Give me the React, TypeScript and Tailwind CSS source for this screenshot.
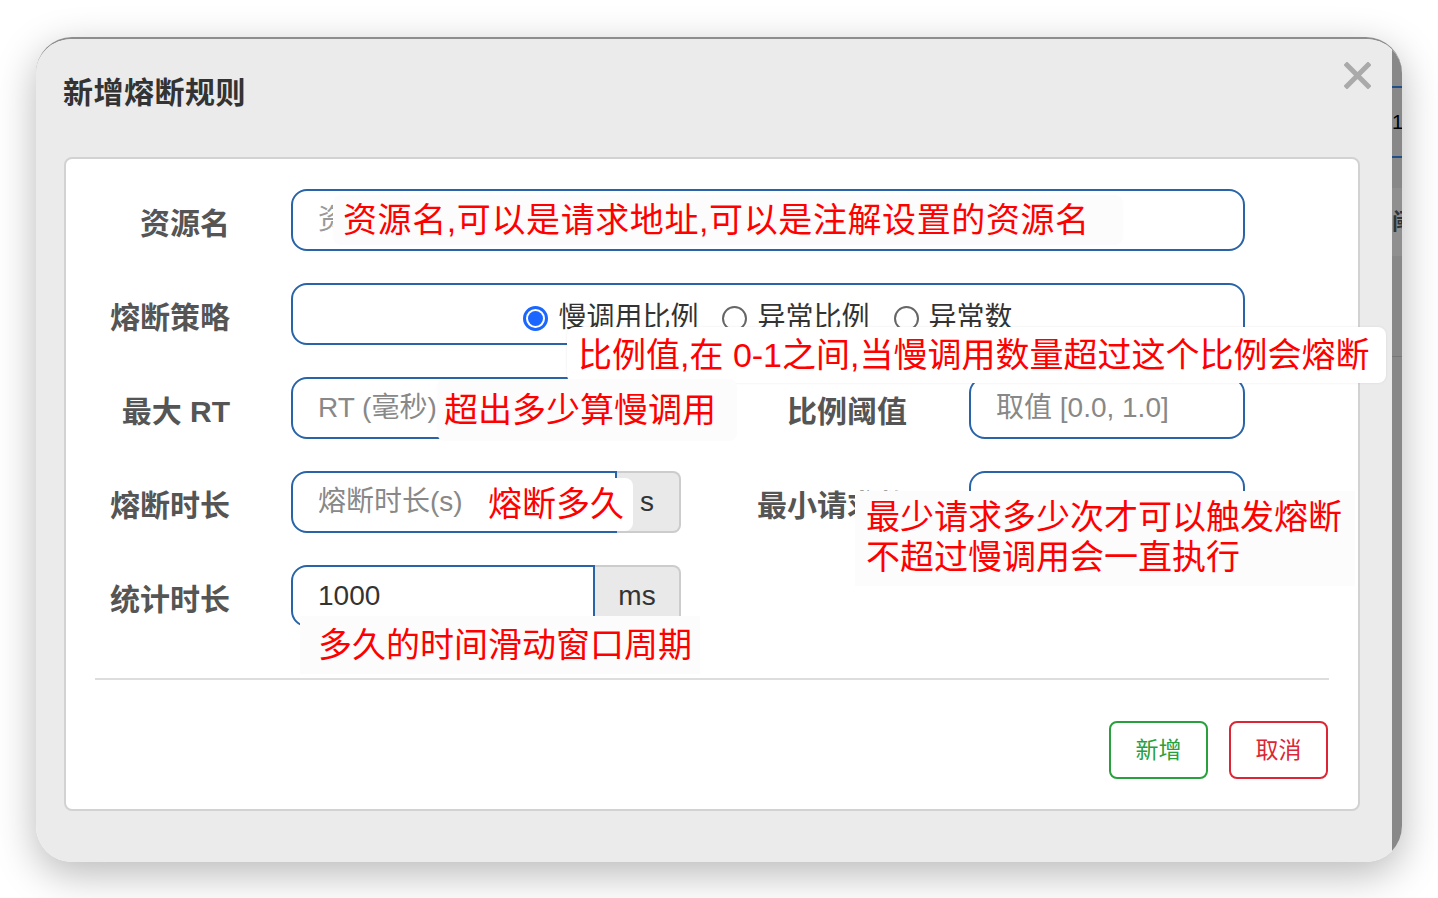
import React from 'react';

const cjk = { fontFamily: '"Liberation Sans", "Noto Sans CJK SC", sans-serif' };

const Label: React.FC<{ text: string; className?: string }> = ({ text, className }) => (
  <div className={`shrink-0 text-right text-[30px] font-bold leading-[36px] text-[#555] mt-[17px] ${className ?? 'w-[164px]'}`}>
    {text}
  </div>
);

const Radio: React.FC<{ checked?: boolean; label: string }> = ({ checked, label }) => (
  <label className="flex items-center gap-[10px] text-[28px] text-[#333]">
    {checked ? (
      <span className="w-[25px] h-[25px] rounded-full border-[3px] border-[#1a66ff] flex items-center justify-center">
        <span className="w-[15px] h-[15px] rounded-full bg-[#1a66ff]" />
      </span>
    ) : (
      <span className="w-[25px] h-[25px] rounded-full border-2 border-[#666] bg-white" />
    )}
    <span>{label}</span>
  </label>
);

const Note: React.FC<{ className: string; children: React.ReactNode }> = ({ className, children }) => (
  <div className={`absolute bg-[#fcfcfc] rounded-lg text-[34px] text-[#ff0000] ${className}`}>{children}</div>
);

export default function App() {
  return (
    <div className="w-[1438px] h-[898px] bg-white pl-[36px] pt-[37px]" style={cjk}>
      <div className="w-[1366px] h-[825px] rounded-[36px] overflow-hidden border-t-2 border-[#8d8d8d] flex shadow-[0_12px_40px_rgba(0,0,0,0.28)]">
        {/* modal */}
        <div className="relative w-[1356px] bg-[#ebebeb] pt-[36px] pl-[27px]">
          <h2 className="text-[30px] font-bold leading-[36px] text-[#333] tracking-[0.5px]">新增熔断规则</h2>
          <button className="absolute right-[20px] top-[21px] w-[30px] h-[30px] flex items-center justify-center">
            <svg width="27" height="27" viewBox="0 0 27 27">
              <path d="M3 3 L24 24 M24 3 L3 24" stroke="#aaaaaa" strokeWidth="5" strokeLinecap="square" />
            </svg>
          </button>

          <div className="relative mt-[46px] ml-[1px] w-[1296px] h-[654px] bg-white border-2 border-[#d2d2d2] rounded-lg pt-[30px]">
            <div className="flex flex-col gap-[32px]">
              {/* 资源名 */}
              <div className="flex items-start">
                <Label text="资源名" />
                <div className="ml-[61px] w-[954px] h-[62px] border-2 border-[#2a64a8] rounded-2xl flex items-center pl-[25px] text-[28px] text-[#999]">
                  资源名
                </div>
              </div>

              {/* 熔断策略 */}
              <div className="flex items-start">
                <Label text="熔断策略" />
                <div className="ml-[61px] w-[954px] h-[62px] border-2 border-[#2a64a8] rounded-2xl flex items-center justify-center gap-[24px] pt-[8px]">
                  <Radio checked label="慢调用比例" />
                  <Radio label="异常比例" />
                  <Radio label="异常数" />
                </div>
              </div>

              {/* 最大 RT / 比例阈值 */}
              <div className="flex items-start">
                <Label text="最大 RT" />
                <div className="ml-[61px] w-[389px] h-[62px] border-2 border-[#2a64a8] rounded-2xl flex items-center pl-[25px] text-[28px] text-[#888]">
                  RT (毫秒)
                </div>
                <Label text="比例阈值" className="w-[227px]" />
                <div className="ml-[62px] w-[276px] h-[62px] border-2 border-[#2a64a8] rounded-2xl flex items-center pl-[25px] text-[28px] text-[#888]">
                  取值 [0.0, 1.0]
                </div>
              </div>

              {/* 熔断时长 / 最小请求数 */}
              <div className="flex items-start">
                <Label text="熔断时长" />
                <div className="ml-[61px] flex h-[62px]">
                  <div className="w-[326px] border-2 border-[#2a64a8] rounded-l-2xl flex items-center pl-[25px] text-[28px] text-[#888]">
                    熔断时长(s)
                  </div>
                  <div className="w-[64px] bg-[#e9e9e9] border-2 border-l-0 border-[#cccccc] rounded-r-lg flex items-center pl-[23px] text-[28px] text-[#333]">
                    s
                  </div>
                </div>
                <Label text="最小请求数" className="w-[226px]" />
                <div className="ml-[62px] w-[276px] h-[62px] border-2 border-[#2a64a8] rounded-2xl" />
              </div>

              {/* 统计时长 */}
              <div className="flex items-start">
                <Label text="统计时长" />
                <div className="ml-[61px] flex h-[62px]">
                  <div className="w-[304px] border-2 border-[#2a64a8] rounded-l-2xl flex items-center pl-[25px] text-[28px] text-[#333]">
                    1000
                  </div>
                  <div className="w-[86px] bg-[#e9e9e9] border-2 border-l-0 border-[#cccccc] rounded-r-lg flex items-center justify-center text-[28px] text-[#333]">
                    ms
                  </div>
                </div>
              </div>
            </div>

            <div className="mx-[29px] mt-[51px] h-[2px] bg-[#dddddd]" />

            <div className="flex justify-end gap-[21px] mr-[30px] mt-[41px]">
              <button className="w-[99px] h-[58px] rounded-lg border-2 border-[#28a03c] text-[#28a03c] text-[23px]">新增</button>
              <button className="w-[99px] h-[58px] rounded-lg border-2 border-[#dc2535] text-[#dc2535] text-[23px]">取消</button>
            </div>

            {/* annotations pasted over the form */}
            <Note className="left-[267px] top-[36px] w-[790px] h-[50px] pl-[10px] leading-[50px] tracking-[0.6px]">
              资源名,可以是请求地址,可以是注解设置的资源名
            </Note>
            <Note className="left-[501px] top-[168px] w-[819px] h-[56px] pl-[11px] leading-[56px] bg-white shadow-[0_0_3px_rgba(0,0,0,0.08)]">
              比例值,在 0-1之间,当慢调用数量超过这个比例会熔断
            </Note>
            <Note className="left-[371px] top-[220px] w-[300px] h-[62px] pl-[7px] leading-[62px]">
              超出多少算慢调用
            </Note>
            <Note className="left-[407px] top-[319px] w-[160px] h-[53px] pl-[15px] leading-[53px] bg-white">
              熔断多久
            </Note>
            <Note className="left-[789px] top-[332px] w-[500px] h-[95px] pl-[11px] pt-[6px] leading-[40px] rounded-none">
              <div>最少请求多少次才可以触发熔断</div>
              <div>不超过慢调用会一直执行</div>
            </Note>
            <Note className="left-[234px] top-[457px] w-[400px] h-[58px] pl-[18px] leading-[58px] rounded-none">
              多久的时间滑动窗口周期
            </Note>
          </div>
        </div>

        {/* page behind the modal */}
        <div className="w-[10px] bg-[#888888] flex flex-col">
          <div className="h-[47px]" />
          <div className="h-[2px] bg-[#1f4f86]" />
          <div className="h-[68px] text-[20px] leading-[68px] text-black overflow-hidden">1</div>
          <div className="h-[2px] bg-[#1f4f86]" />
          <div className="h-[30px]" />
          <div className="h-[68px] bg-[#8f8f8f] text-[22px] font-bold leading-[68px] text-[#333] overflow-hidden">阈</div>
          <div className="h-[100px]" />
          <div className="h-[1px] bg-[#777]" />
        </div>
      </div>
    </div>
  );
}
